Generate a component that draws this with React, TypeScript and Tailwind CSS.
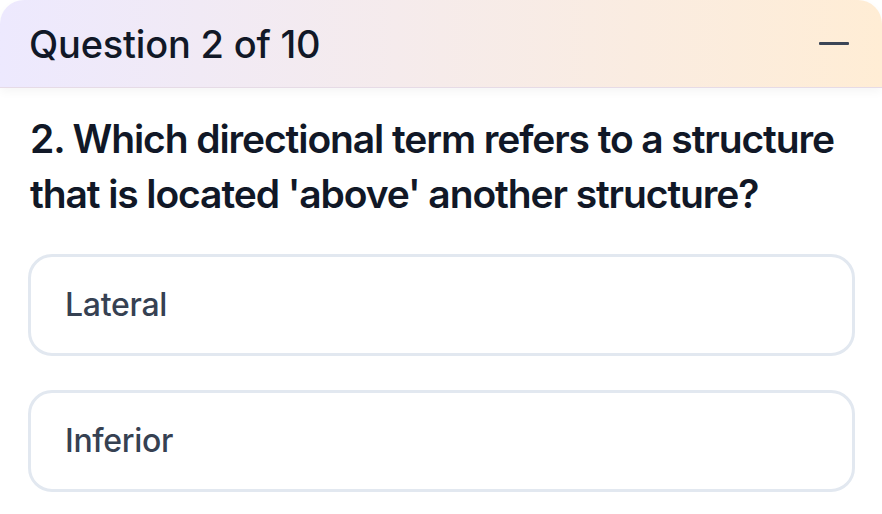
import React from "react";

export default function App() {
  const options = ["Lateral", "Inferior"];
  return (
    <div className="w-[882px] h-[514px] bg-white overflow-hidden" style={{ fontFamily: "Inter, 'Noto Sans', sans-serif" }}>
      <div className="h-[88px] rounded-t-[24px] bg-gradient-to-r from-[#ede9fe] to-[#ffedd5] border-b border-[#e6dbe6] shadow-[0_4px_10px_rgba(0,0,0,0.04)] flex items-center justify-between pl-[29px] pr-[33px]">
        <h2 className="text-[38px] leading-[44px] font-medium text-[#111827] tracking-[-0.2px]">Question 2 of 10</h2>
        <div className="w-[30px] h-[3px] rounded-[1px] bg-[#3b4556]" />
      </div>
      <div className="px-[28px] pt-[23px]">
        <p className="pl-[2px] text-[39px] leading-[55px] font-semibold text-[#111827] tracking-[-1.1px] whitespace-nowrap">
          2. Which directional term refers to a structure
          <br />
          that is located 'above' another structure?
        </p>
        <div className="mt-[33px] flex flex-col gap-[34px] w-[827px]">
          {options.map((o) => (
            <div
              key={o}
              className="h-[102px] rounded-[24px] border-[3px] border-[#e2e8f0] bg-white flex items-center pl-[34px]"
            >
              <span className="text-[32px] leading-[40px] font-medium tracking-[-0.3px] text-[#364152]">{o}</span>
            </div>
          ))}
        </div>
      </div>
    </div>
  );
}
